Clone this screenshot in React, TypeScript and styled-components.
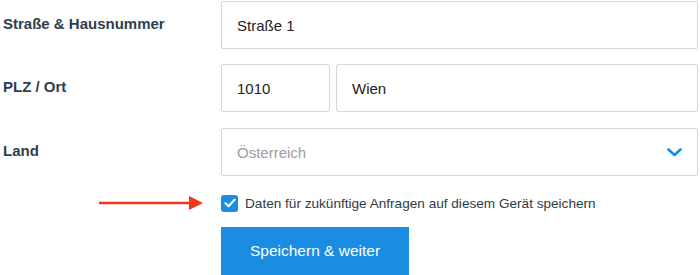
import React from "react";
import styled, { createGlobalStyle } from "styled-components";

const Global = createGlobalStyle`
  html, body { margin: 0; padding: 0; background: #ffffff; }
  body { font-family: "Liberation Sans", Arial, sans-serif; }
  * { box-sizing: border-box; }
`;

const Form = styled.form`
  display: grid;
  grid-template-columns: 221px 1fr;
  padding: 1px 2px 0 0;
  width: 700px;
  height: 275px;
  overflow: hidden;
`;

const Label = styled.label<{ $top?: number }>`
  display: flex;
  align-items: center;
  padding: 0 0 3px 3px;
  margin-top: ${(p) => p.$top ?? 0}px;
  height: 48px;
  font-size: 15px;
  font-weight: 700;
  color: #2d3e50;
`;

const Field = styled.div<{ $top?: number }>`
  display: flex;
  gap: 6px;
  margin-top: ${(p) => p.$top ?? 0}px;
`;

const Input = styled.input<{ $w?: number }>`
  height: 48px;
  flex: ${(p) => (p.$w ? `0 0 ${p.$w}px` : "1 1 auto")};
  min-width: 0;
  border: 1px solid #d3d8dd;
  border-radius: 2px;
  padding: 0 15px;
  font-family: "Liberation Sans", Arial, sans-serif;
  font-size: 15px;
  color: #222222;
  background: #ffffff;
  outline: none;
`;

const Select = styled.div`
  flex: 1 1 auto;
  height: 48px;
  border: 1px solid #d3d8dd;
  border-radius: 2px;
  padding: 0 15px;
  display: flex;
  align-items: center;
  justify-content: space-between;
  font-size: 15px;
  color: #9a9ea3;
`;

const ArrowCell = styled.div`
  display: flex;
  align-items: center;
  justify-content: flex-end;
  padding-right: 18px;
  margin-top: 18px;
  height: 17px;
`;

const CheckRow = styled.label`
  display: flex;
  align-items: center;
  gap: 7px;
  margin-top: 18px;
  height: 17px;
  font-size: 13.6px;
  color: #333a40;
`;

const Box = styled.span`
  width: 17px;
  height: 17px;
  border-radius: 3px;
  background: #1a8de2;
  display: flex;
  align-items: center;
  justify-content: center;
`;

const Empty = styled.div``;

const ButtonCell = styled.div`
  margin-top: 15px;
`;

const Button = styled.button`
  width: 188px;
  height: 48px;
  border: none;
  border-radius: 0;
  background: #1a8de2;
  color: #ffffff;
  font-family: "Liberation Sans", Arial, sans-serif;
  font-size: 15.5px;
  padding: 0;
  cursor: pointer;
`;

export default function App() {
  return (
    <>
      <Global />
      <Form onSubmit={(e) => e.preventDefault()}>
        <Label>Straße &amp; Hausnummer</Label>
        <Field>
          <Input defaultValue="Straße 1" />
        </Field>

        <Label $top={15}>PLZ / Ort</Label>
        <Field $top={15}>
          <Input $w={109} defaultValue="1010" />
          <Input defaultValue="Wien" />
        </Field>

        <Label $top={16}>Land</Label>
        <Field $top={16}>
          <Select>
            <span>Österreich</span>
            <svg width="15" height="9" viewBox="0 0 15 9">
              <path d="M1.5 1.5 L7.5 7 L13.5 1.5" fill="none" stroke="#1a8de2" strokeWidth="2.6" strokeLinecap="round" strokeLinejoin="round" />
            </svg>
          </Select>
        </Field>

        <ArrowCell>
          <svg width="104" height="16" viewBox="0 0 104 16">
            <line x1="0" y1="8" x2="91" y2="8" stroke="#f0391c" strokeWidth="2.5" />
            <polygon points="90,1 104,8 90,15" fill="#f0391c" />
          </svg>
        </ArrowCell>
        <CheckRow>
          <Box>
            <svg width="12" height="10" viewBox="0 0 12 10">
              <path d="M1.5 5.2 L4.6 8.2 L10.5 1.8" fill="none" stroke="#ffffff" strokeWidth="2.2" strokeLinecap="round" strokeLinejoin="round" />
            </svg>
          </Box>
          <span>Daten für zukünftige Anfragen auf diesem Gerät speichern</span>
        </CheckRow>

        <Empty />
        <ButtonCell>
          <Button type="submit">Speichern &amp; weiter</Button>
        </ButtonCell>
      </Form>
    </>
  );
}
